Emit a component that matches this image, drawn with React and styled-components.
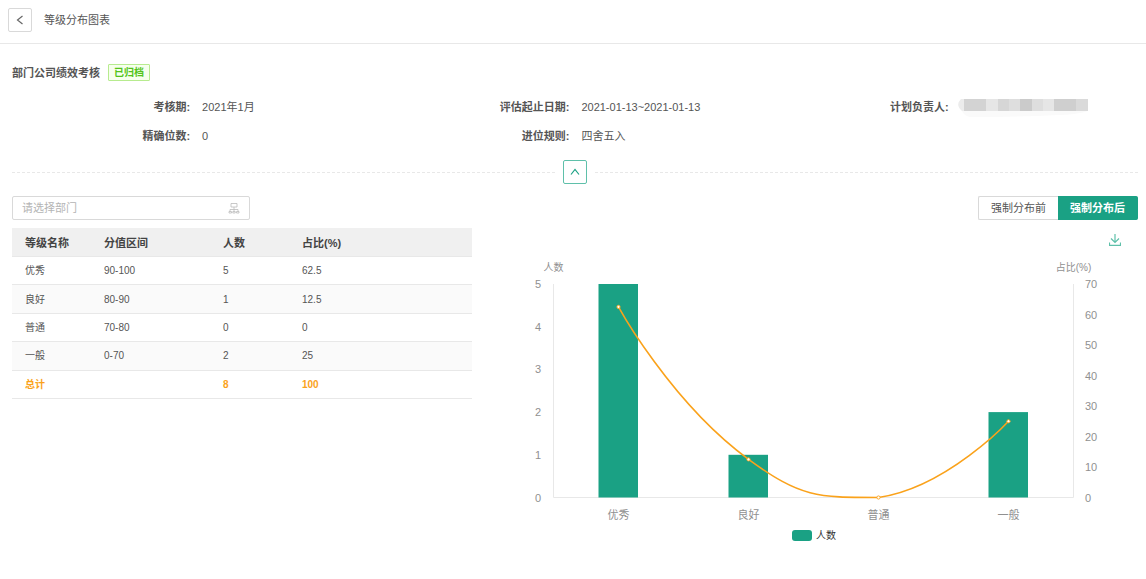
import React, { useState } from 'react';
import styled, { createGlobalStyle } from 'styled-components';

const GlobalStyle = createGlobalStyle`
  * {
    box-sizing: border-box;
  }

  body {
    margin: 0;
    color: #555;
    background-color: #fff;
    font-size: 11px;
    line-height: 16px;
    font-family: "Liberation Sans", "Noto Sans CJK SC", sans-serif;
  }

  button, input {
    font: inherit;
  }
`;

const Header = styled.header`
  display: flex;
  align-items: center;
  gap: 12px;
  height: 44px;
  padding: 0 8px 4px;
  border-bottom: 1px solid #e8e8e8;

  h1 {
    margin: 0;
    font-size: 11px;
    font-weight: 400;
  }
`;

const IconButton = styled.button`
  display: flex;
  align-items: center;
  justify-content: center;
  width: 24px;
  height: 24px;
  padding: 0;
  color: ${({ $primary }) => ($primary ? '#1aa184' : '#666')};
  background-color: #fff;
  border: 1px solid ${({ $primary }) => ($primary ? '#5fc0aa' : '#d9d9d9')};
  border-radius: 2px;
  cursor: pointer;
`;

const Main = styled.main`
  padding: 20px 8px 0 12px;
`;

const PlanTitle = styled.div`
  display: flex;
  align-items: center;
  gap: 8px;

  h2 {
    margin: 0;
    font-size: 11px;
    font-weight: 700;
  }
`;

const Tag = styled.span`
  padding: 0 5px;
  color: #52c41a;
  background-color: #f6ffed;
  border: 1px solid #b7eb8f;
  border-radius: 1px;
  font-size: 10px;
  font-weight: 700;
  line-height: 15px;
`;

const InfoList = styled.dl`
  display: grid;
  grid-template-columns: repeat(3, 1fr);
  row-gap: 13px;
  margin: 18px -8px 16px -4px;
`;

const InfoItem = styled.div`
  display: flex;
  align-items: center;
  gap: 12px;
  height: 16px;

  dt {
    width: 48%;
    font-weight: 700;
    text-align: right;
  }

  dd {
    margin: 0;
  }
`;

const Divider = styled.div`
  display: flex;
  align-items: center;
  gap: 8px;

  &::before,
  &::after {
    content: '';
    flex: 1;
    border-top: 1px dashed #e8e8e8;
  }
`;

const Content = styled.section`
  display: grid;
  grid-template-columns: 46fr 65fr;
  gap: 8px 16px;
  margin-top: 12px;
`;

const DeptSelect = styled.label`
  display: flex;
  align-items: center;
  width: 238px;
  height: 24px;
  padding: 0 9px;
  color: #bbb;
  border: 1px solid #d9d9d9;
  border-radius: 2px;

  input {
    flex: 1;
    min-width: 0;
    padding: 0;
    color: #555;
    border: 0;
    outline: 0;
  }

  input::placeholder {
    color: #b4b4b4;
  }
`;

const SwitchGroup = styled.div`
  display: flex;
  justify-content: flex-end;
`;

const SwitchButton = styled.button`
  height: 24px;
  padding: 0 12px;
  color: ${({ $active }) => ($active ? '#fff' : '#555')};
  background-color: ${({ $active }) => ($active ? '#1aa184' : '#fff')};
  border: 1px solid ${({ $active }) => ($active ? '#1aa184' : '#d9d9d9')};
  font-weight: ${({ $active }) => ($active ? 700 : 400)};
  cursor: pointer;

  &:first-child {
    border-right-width: 0;
    border-radius: 2px 0 0 2px;
  }

  &:last-child {
    border-left-width: 0;
    border-radius: 0 2px 2px 0;
  }
`;

const LevelTable = styled.table`
  width: 100%;
  height: 171px;
  table-layout: fixed;
  border-spacing: 0;
  font-size: 10px;
  text-align: left;

  th, td {
    padding: 1px 0 0 13px;
    line-height: 16px;
    border-bottom: 1px solid #e8e8e8;
  }

  th {
    height: 29px;
    color: #444;
    background-color: #f0f0f0;
    font-size: 11px;
  }

  th:nth-child(1), th:nth-child(3) {
    width: 79px;
  }

  th:nth-child(2) {
    width: 119px;
  }

  tbody tr:nth-child(even) {
    background-color: #fafafa;
  }
`;

const TotalRow = styled.tr`
  color: #faa21b;
  font-weight: 700;
`;

const ChartPanel = styled.div`
  display: flex;
  flex-direction: column;
`;

const DownloadButton = styled.button`
  display: flex;
  align-items: center;
  justify-content: center;
  align-self: flex-end;
  width: 24px;
  height: 24px;
  margin-right: 11px;
  padding: 0;
  color: #5fc0aa;
  background: none;
  border: 0;
  cursor: pointer;
`;

const ChartSvg = styled.svg`
  display: block;
  width: 100%;
  height: auto;
  fill: #909090;
  font-size: 11px;
`;

const LineMark = styled.path`
  fill: none;
  stroke: #faa21b;
  stroke-width: 1.6;
`;

const MaskSvg = styled.svg`
  display: block;
  overflow: visible;
`;

const levels = [
  { name: '优秀', range: '90-100', count: 5, percent: 62.5 },
  { name: '良好', range: '80-90', count: 1, percent: 12.5 },
  { name: '普通', range: '70-80', count: 0, percent: 0 },
  { name: '一般', range: '0-70', count: 2, percent: 25 },
];

const plot = { left: 65.5, right: 585.5, top: 32, bottom: 245.5 };
const step = (plot.right - plot.left) / levels.length;
const scaleY = (value, max) => plot.bottom - (value / max) * (plot.bottom - plot.top);
const centerX = (i) => plot.left + step * (i + 0.5);

// smooth curve through all points, control points never leave the plot values
function smoothPath(points) {
  const ys = points.map((p) => p[1]);
  const clamp = (y) => Math.max(Math.min(...ys), Math.min(Math.max(...ys), y));
  const dist = (a, b) => Math.hypot(a[0] - b[0], a[1] - b[1]);
  const controls = points.map((p, i) => {
    const prev = points[i - 1];
    const next = points[i + 1];
    if (!prev || !next) return [p, p];
    const ratio = dist(p, next) / (dist(p, next) + dist(p, prev));
    const vx = (next[0] - prev[0]) * 0.5;
    const vy = (next[1] - prev[1]) * 0.5;
    return [
      [p[0] - vx * (1 - ratio), clamp(p[1] - vy * (1 - ratio))],
      [p[0] + vx * ratio, clamp(p[1] + vy * ratio)],
    ];
  });
  return points.reduce((d, p, i) => (
    i === 0 ? `M${p}` : `${d} C${controls[i - 1][1]} ${controls[i][0]} ${p}`
  ), '');
}

function LevelChart() {
  const points = levels.map((item, i) => [centerX(i), scaleY(item.percent, 70)]);
  return (
    <ChartSvg viewBox="0 0 650 300" role="img" aria-label="等级分布">
      <g fontSize="10" textAnchor="middle">
        <text x={plot.left} y="19">人数</text>
        <text x={plot.right} y="19">占比(%)</text>
      </g>
      <path
        d={`M${plot.left} ${plot.top}V${plot.bottom}H${plot.right}V${plot.top}`}
        fill="none"
        stroke="#e8e8e8"
      />
      {[0, 1, 2, 3, 4, 5].map((n) => (
        <text key={n} x="53" y={scaleY(n, 5) + 4} textAnchor="end">{n}</text>
      ))}
      {[0, 10, 20, 30, 40, 50, 60, 70].map((n) => (
        <text key={n} x="597" y={scaleY(n, 70) + 4}>{n}</text>
      ))}
      {levels.map((item, i) => (
        <g key={item.name}>
          <rect
            x={centerX(i) - 20}
            y={scaleY(item.count, 5)}
            width="39.5"
            height={plot.bottom - scaleY(item.count, 5)}
            fill="#1aa184"
          />
          <text x={centerX(i)} y="267" textAnchor="middle">{item.name}</text>
        </g>
      ))}
      <LineMark d={smoothPath(points)} />
      {points.map(([x, y]) => (
        <circle key={x} cx={x} cy={y} r="1.6" fill="#fff" stroke="#faa21b" strokeWidth="0.9" />
      ))}
      <rect x="304" y="278" width="20" height="11" rx="3" fill="#1aa184" />
      <text x="328" y="287" fontSize="10" fill="#333">人数</text>
    </ChartSvg>
  );
}

const maskBlocks = [
  [0, 6, '#ececec'], [6, 22, '#d3d3d3'], [28, 12, '#e6e6e6'], [40, 11, '#d6d6d6'],
  [51, 11, '#dedede'], [62, 12, '#cbcbcb'], [74, 11, '#dedede'], [85, 11, '#e6e6e6'],
  [96, 22, '#cfcfcf'], [118, 12, '#dadada'],
];

function MaskedName() {
  return (
    <MaskSvg width="130" height="20" viewBox="3 -1 130 20" aria-hidden="true">
      <clipPath id="mask-shape">
        <path d="M3 1H130V13Q118 17 100 17Q60 19 12 19Q6 18 4 13Q-3 7 3 1Z" />
      </clipPath>
      <g clipPath="url(#mask-shape)">
        <rect width="130" height="20" fill="#fafafa" />
        {maskBlocks.map(([x, w, fill]) => (
          <rect key={x} x={x} y="1" width={w} height="12" fill={fill} />
        ))}
      </g>
    </MaskSvg>
  );
}

function Icon({ size = 12, children }) {
  return (
    <svg width={size} height={size} viewBox="0 0 12 12" fill="none" stroke="currentColor" aria-hidden="true">
      {children}
    </svg>
  );
}

function App() {
  const [mode, setMode] = useState('after');
  const [open, setOpen] = useState(true);

  return (
    <>
      <GlobalStyle />
      <Header>
        <IconButton type="button" aria-label="返回">
          <Icon><path d="M8.5 2L3.5 6L8.5 10" strokeWidth="1.2" /></Icon>
        </IconButton>
        <h1>等级分布图表</h1>
      </Header>
      <Main>
        <PlanTitle>
          <h2>部门公司绩效考核</h2>
          <Tag>已归档</Tag>
        </PlanTitle>
        {open && (
          <InfoList>
            <InfoItem><dt>考核期:</dt><dd>2021年1月</dd></InfoItem>
            <InfoItem><dt>评估起止日期:</dt><dd>2021-01-13~2021-01-13</dd></InfoItem>
            <InfoItem><dt>计划负责人:</dt><dd><MaskedName /></dd></InfoItem>
            <InfoItem><dt>精确位数:</dt><dd>0</dd></InfoItem>
            <InfoItem><dt>进位规则:</dt><dd>四舍五入</dd></InfoItem>
          </InfoList>
        )}
        <Divider>
          <IconButton type="button" $primary aria-label="收起" onClick={() => setOpen(!open)}>
            <Icon><path d="M2 8.5L6 3.5L10 8.5" strokeWidth="1.2" /></Icon>
          </IconButton>
        </Divider>
        <Content>
          <DeptSelect>
            <input type="text" placeholder="请选择部门" aria-label="部门" />
            <Icon>
              <path d="M3 1.5H9V5H3ZM6 5V7.5M2 9.5V7.5H10V9.5M6 7.5V9.5M1 9.5H3.5V11H1ZM4.8 9.5H7.2V11H4.8ZM8.5 9.5H11V11H8.5Z" strokeWidth="0.8" />
            </Icon>
          </DeptSelect>
          <SwitchGroup>
            <SwitchButton type="button" $active={mode === 'before'} onClick={() => setMode('before')}>
              强制分布前
            </SwitchButton>
            <SwitchButton type="button" $active={mode === 'after'} onClick={() => setMode('after')}>
              强制分布后
            </SwitchButton>
          </SwitchGroup>
          <div>
            <LevelTable>
              <thead>
                <tr>
                  <th>等级名称</th>
                  <th>分值区间</th>
                  <th>人数</th>
                  <th>占比(%)</th>
                </tr>
              </thead>
              <tbody>
                {levels.map((item) => (
                  <tr key={item.name}>
                    <td>{item.name}</td>
                    <td>{item.range}</td>
                    <td>{item.count}</td>
                    <td>{item.percent}</td>
                  </tr>
                ))}
                <TotalRow>
                  <td>总计</td>
                  <td />
                  <td>8</td>
                  <td>100</td>
                </TotalRow>
              </tbody>
            </LevelTable>
          </div>
          <ChartPanel>
            <DownloadButton type="button" aria-label="下载">
              <Icon>
                <path d="M6 0V8.5M2 4.5L6 8.5L10 4.5M0.5 8.5V11.4H11.5V8.5" strokeWidth="1.2" />
              </Icon>
            </DownloadButton>
            <LevelChart />
          </ChartPanel>
        </Content>
      </Main>
    </>
  );
}

export default App;
